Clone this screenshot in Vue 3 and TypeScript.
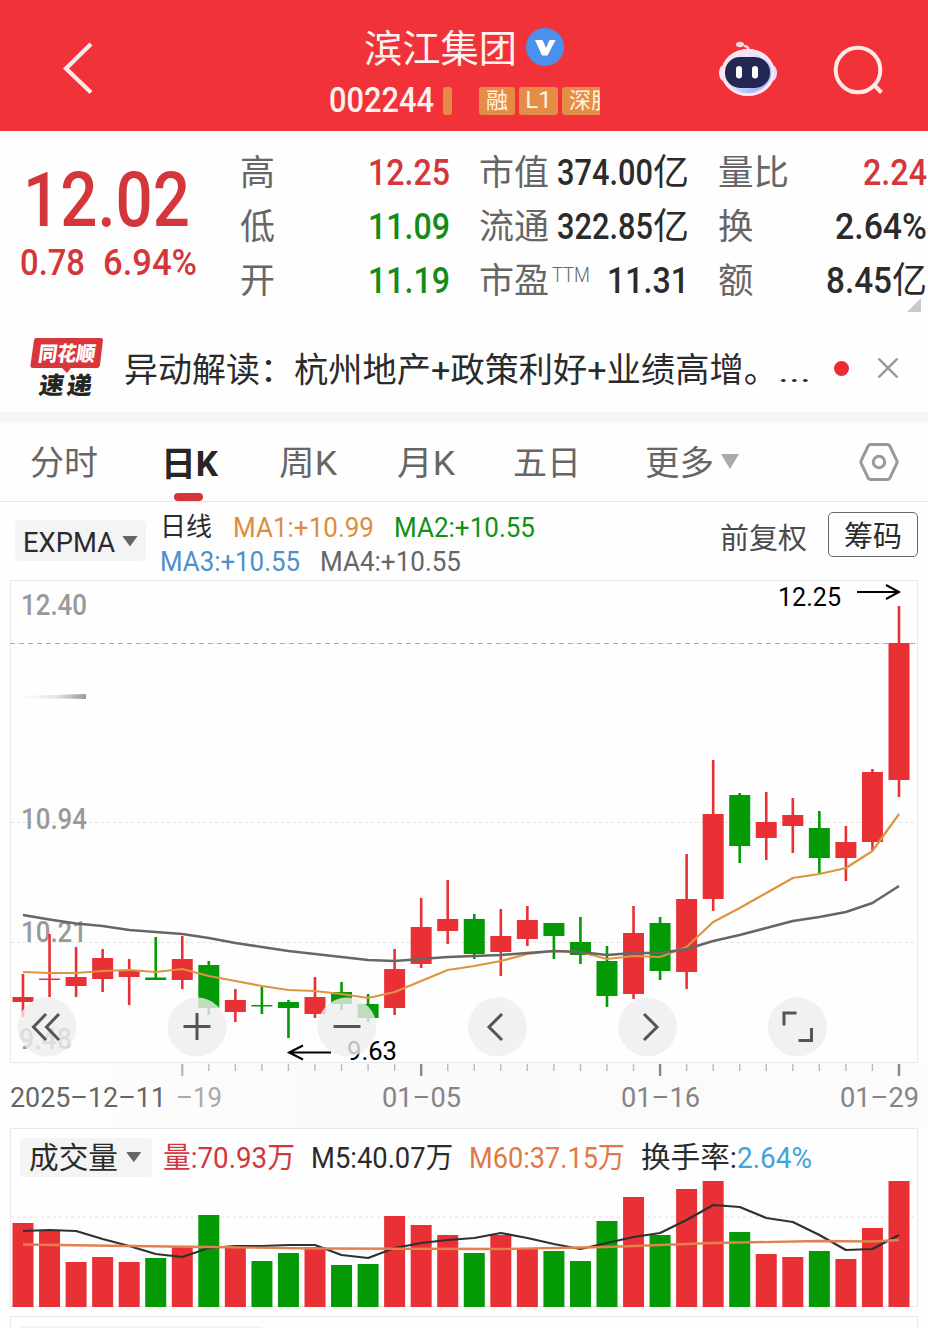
<script setup lang="ts">
import { h, type FunctionalComponent } from 'vue'

interface LabelProps { t: string; s: number; w: number }

// A line of text fitted to a given advance width; its box is as tall as the capitals.
const Label: FunctionalComponent<LabelProps> = (p) => {
  const height = Math.round(p.s * 0.711)
  return h('svg', { class: 'label', width: p.w, height, overflow: 'visible' }, [
    h('text', { x: 0, y: height, 'font-size': p.s, textLength: p.w, lengthAdjust: 'spacingAndGlyphs' }, p.t),
  ])
}
Label.props = ['t', 's', 'w']

const quotes = [
  { name: '高', value: '12.25', tone: 'up', cap: '市值', capValue: '374.00', w: 96, unit: '亿', side: '量比', sideValue: '2.24', sw: 64, sideUnit: '', sideTone: 'up' },
  { name: '低', value: '11.09', tone: 'down', cap: '流通', capValue: '322.85', w: 96, unit: '亿', side: '换', sideValue: '2.64%', sw: 92, sideUnit: '', sideTone: '' },
  { name: '开', value: '11.19', tone: 'down', cap: '市盈', capValue: '11.31', w: 82, unit: '', side: '额', sideValue: '8.45', sw: 66, sideUnit: '亿', sideTone: '' },
]

const x = (i: number): number => 23 + i * 26.545

type Candle = [up: number, high: number, top: number, bottom: number, low: number]
const candles: Candle[] = [
  [1, 974, 997, 1002, 1017], [1, 934, 978.5, 980, 997], [1, 947, 977, 986, 997], [1, 949, 958, 979, 992],
  [1, 959, 971, 977, 1005], [0, 937, 977.5, 980, 980], [1, 936, 959, 980, 989], [0, 961, 965, 1008, 1015],
  [1, 989, 1000, 1012, 1022], [0, 987, 1005, 1006.5, 1014], [0, 1000, 1002, 1008, 1038], [1, 977, 997, 1014, 1018],
  [0, 982, 992, 1004, 1010], [0, 994, 1004, 1018, 1022], [1, 949, 969, 1008, 1015], [1, 898, 927, 964, 968],
  [1, 880, 919, 931, 944], [0, 914, 919, 954, 959], [1, 909, 936, 952, 976], [1, 906, 920, 939, 946],
  [0, 923, 923, 936, 959], [0, 917, 942, 955, 964], [0, 946, 961, 996, 1007], [1, 906, 933, 994, 999],
  [0, 917, 923, 971, 980], [1, 854, 899, 972, 989], [1, 760, 814, 899, 911], [0, 793, 795, 846, 863],
  [1, 792, 822, 838, 860], [1, 798, 815, 826, 853], [0, 811, 828, 858, 873], [1, 826, 842, 858, 881],
  [1, 769, 772, 842, 850], [1, 606, 643, 780, 797],
]
const volumes = [
  1223, 1231, 1262, 1257, 1262, 1258, 1247, 1215, 1248, 1261, 1253, 1247, 1265, 1264, 1216, 1225, 1235,
  1253, 1235, 1249, 1251, 1261, 1221, 1197, 1235, 1189, 1181, 1232, 1254, 1257, 1251, 1259, 1228, 1181,
]
const line = (ys: number[]): string => ys.map((y, i) => `${x(i).toFixed(1)},${y}`).join(' ')

const fast = line([972, 973, 973, 971, 970, 972, 969, 976, 981, 986, 990, 991, 994, 998, 992, 981, 970, 966, 961, 954, 951, 952, 959, 956, 957, 947, 922, 908, 893, 878, 874, 868, 851, 814])
const slow = line([915, 919.5, 923.5, 926, 930, 932, 934, 938, 943, 947, 951, 954, 957, 960, 961, 959, 957, 956, 955, 953, 951, 952, 955, 953, 953, 949, 941, 935, 928, 921, 917, 912, 903, 886])
const volFast = line([1231, 1230, 1231, 1239, 1246, 1254, 1257, 1248, 1246, 1246, 1245, 1245, 1255, 1258, 1248, 1243, 1240, 1238, 1233, 1238, 1244, 1249, 1243, 1237, 1233, 1220, 1205, 1207, 1218, 1222, 1235, 1250, 1249, 1235])
const volSlow = '23,1244.5 129,1246 209,1247 315,1248.5 501,1249 607,1247 713,1243 819,1241 872,1241.5 899,1240'

const ticks = Array.from({ length: 28 }, (_, k) => k + 6)
const isMajor = (i: number): boolean => (i - 6) % 9 === 0

const controls = [
  { cx: 47, d: 'M46 1014 L33.500 1027 L46 1040 M59 1014 L46.500 1027 L59 1040' },
  { cx: 197, d: 'M183.500 1026.500 H210.500 M197 1013 V1040' },
  { cx: 347, d: 'M333.500 1026.500 H360.500' },
  { cx: 497.5, d: 'M502 1014 L489 1027 L502 1040' },
  { cx: 647.5, d: 'M644 1014 L657 1027 L644 1040' },
  { cx: 797.5, d: 'M784 1025.500 V1013 H796.500 M811.500 1028 V1040.500 H798.500' },
]
</script>

<template>
  <main class="page">
    <header class="top">
      <svg class="back" width="36" height="56" viewBox="0 0 36 56"><path d="M31 5 6 29.500l25 24" /></svg>
      <div class="title">
        <div class="name-row">
          <Label class="name" t="滨江集团" :s="38" :w="153" />
          <svg width="38" height="38" viewBox="0 0 38 38">
            <circle cx="19" cy="19" r="19" fill="#4b90ea" />
            <path d="M9 12h7.500l3.500 8 3.500-8H29.500l-8 15.500h-5.500z" fill="#fff" />
          </svg>
        </div>
        <div class="code-row">
          <Label class="code" t="002244" :s="35.500" :w="105" />
          <i class="tag sliver"></i>
          <span class="tag t1">融</span><span class="tag t2">L1</span><span class="tag t3">深股</span>
        </div>
      </div>
      <div class="actions">
        <svg width="60" height="58" viewBox="0 0 60 58">
          <defs><linearGradient id="shell" x1="0" y1="0" x2="1" y2="1">
            <stop offset="0" stop-color="#ffe5f4" /><stop offset=".5" stop-color="#dfe2ff" /><stop offset=".75" stop-color="#a8b4fb" /><stop offset="1" stop-color="#ffe2ee" />
          </linearGradient></defs>
          <path d="M31 12q0-6-5-6" fill="none" stroke="#ffd3dc" stroke-width="2.500" />
          <ellipse cx="22" cy="4.500" rx="4" ry="2.800" fill="#ffd6df" />
          <ellipse cx="6" cy="33" rx="5" ry="8" fill="#ffe2f0" />
          <ellipse cx="54" cy="33" rx="5" ry="8" fill="#e9dcf9" />
          <ellipse cx="30" cy="32.500" rx="26.500" ry="23.500" fill="url(#shell)" />
          <ellipse cx="30" cy="32.500" rx="25" ry="22" fill="none" stroke="#ffe4f1" stroke-width="3" />
          <rect x="7" y="17" width="45" height="31" rx="15" fill="#222852" />
          <rect x="18" y="26" width="6" height="12.500" rx="3" fill="#fff" />
          <rect x="34" y="26" width="6" height="12.500" rx="3" fill="#fff" />
        </svg>
        <svg class="search" width="54" height="54" viewBox="0 0 54 54">
          <circle cx="26" cy="26" r="22.300" /><path d="M41 40l8.500 8.500" />
        </svg>
      </div>
    </header>

    <section class="quote">
      <div class="price up">
        <Label class="medium" t="12.02" :s="76" :w="167" />
        <div class="change">
          <Label class="medium" t="0.78" :s="36" :w="65" />
          <Label class="medium" t="6.94%" :s="36" :w="94" />
        </div>
      </div>
      <div class="stats">
        <div v-for="q in quotes" :key="q.name" class="stat">
          <div class="c1"><Label class="muted" :t="q.name" :s="35" :w="35" /><Label class="medium" :class="q.tone" :t="q.value" :s="36" :w="82" /></div>
          <div class="c2">
            <span class="cap"><Label class="muted" :t="q.cap" :s="35" :w="70" /><Label v-if="!q.unit" class="muted ttm" t="TTM" :s="20" :w="38" /></span>
            <span class="val"><Label class="medium" :t="q.capValue" :s="36" :w="q.w" /><Label v-if="q.unit" :t="q.unit" :s="36" :w="36" /></span>
          </div>
          <div class="c3">
            <Label class="muted" :t="q.side" :s="35" :w="q.side.length * 35.500" />
            <span class="val"><Label class="medium" :class="q.sideTone" :t="q.sideValue" :s="36" :w="q.sw" /><Label v-if="q.sideUnit" :t="q.sideUnit" :s="36" :w="35" /></span>
          </div>
        </div>
        <i class="corner"></i>
      </div>
    </section>

    <section class="notice">
      <svg width="74" height="62" viewBox="0 0 74 62">
        <path d="M6 1H71q2 0 2 2L70 28q-.5 3-3 3H41l-4 5-5-5H3q-3 0-2.500-3L4 3q.4-2 2-2z" fill="#d9363c" />
        <g transform="skewX(-8)" font-weight="900">
          <text x="11" y="24" font-size="20.500" textLength="57" lengthAdjust="spacingAndGlyphs" fill="#fff">同花顺</text>
          <text x="16" y="57" font-size="24" textLength="25" lengthAdjust="spacingAndGlyphs" fill="#252525">速</text>
          <text x="44" y="57" font-size="24" textLength="25" lengthAdjust="spacingAndGlyphs" fill="#252525">递</text>
        </g>
      </svg>
      <p class="news"><Label t="异动解读：" :s="34" :w="170" /><Label t="杭州地产+政策利好+业绩高增。" :s="34" :w="484" /><Label t="..." :s="28" :w="33" /></p>
      <i class="dot"></i>
      <svg class="close" width="20" height="20" viewBox="0 0 20 20"><path d="M.5.5l19 19M19.500.5l-19 19" /></svg>
    </section>

    <nav class="tabs">
      <Label t="分时" :s="34" :w="68" />
      <span class="active"><Label t="日K" :s="34.500" :w="57" /></span>
      <Label t="周K" :s="34" :w="58" />
      <Label t="月K" :s="34" :w="58" />
      <Label t="五日" :s="34" :w="68" />
      <span class="more"><Label t="更多" :s="34" :w="69" /><i class="caret"></i></span>
      <svg class="gear" width="40" height="40" viewBox="0 0 40 40">
        <path d="M11.500 2.500h17q1.500 0 2.200 1.300l7 14.500q.8 1.700 0 3.400l-7 14.500q-.7 1.300-2.200 1.300h-17q-1.500 0-2.200-1.300l-7-14.500q-.8-1.700 0-3.400l7-14.500q.7-1.300 2.200-1.300z" />
        <circle cx="20" cy="20" r="5.700" />
      </svg>
    </nav>

    <section class="legend">
      <button class="pick"><Label t="EXPMA" :s="27.500" :w="92" /><i class="caret small"></i></button>
      <div class="averages">
        <div><Label t="日线" :s="26" :w="52" /><Label class="orange l1" t="MA1:+10.99" :s="27.500" :w="141" /><Label class="green l2" t="MA2:+10.55" :s="27.500" :w="141" /></div>
        <div><Label class="blue" t="MA3:+10.55" :s="27.500" :w="140" /><Label class="muted l2" t="MA4:+10.55" :s="27.500" :w="141" /></div>
      </div>
      <Label class="adjust" t="前复权" :s="29" :w="87" />
      <button class="chips"><Label t="筹码" :s="29" :w="58" /></button>
    </section>

    <svg class="chart" width="928" height="748" viewBox="0 580 928 748">
      <defs>
        <linearGradient id="fade" x1="0" x2="1"><stop offset="0" stop-color="#fefefe" /><stop offset=".55" stop-color="#e4e4e4" /><stop offset="1" stop-color="#999" /></linearGradient>
        <linearGradient id="mist" x1="0" x2="1"><stop offset="0" stop-color="#fefefe" /><stop offset=".35" stop-color="#fafafa" /><stop offset="1" stop-color="#fbfbfb" /></linearGradient>
      </defs>
      <rect x="0" y="1063" width="928" height="65" fill="url(#mist)" />
      <rect x="10.500" y="580.500" width="907" height="482" class="frame" />
      <path d="M11 822.500H917M11 942.500H917" class="grid" />
      <path d="M10 643.500H916" class="last" />
      <path d="M20 696l66-2v5l-66-1z" fill="url(#fade)" />
      <g class="scale">
        <text x="21" y="615" textLength="66" lengthAdjust="spacingAndGlyphs">12.40</text>
        <text x="21" y="829" textLength="66" lengthAdjust="spacingAndGlyphs">10.94</text>
        <text x="21" y="942" textLength="66" lengthAdjust="spacingAndGlyphs">10.21</text>
        <text x="19" y="1049" textLength="53" lengthAdjust="spacingAndGlyphs">9.48</text>
      </g>
      <g v-for="(c, i) in candles" :key="i" :class="c[0] ? 'rise' : 'fall'">
        <rect :x="x(i) - 1.300" :y="c[1]" width="2.600" :height="c[4] - c[1]" />
        <rect :x="x(i) - 10.500" :y="c[2]" width="21" :height="c[3] - c[2]" />
      </g>
      <polyline :points="fast" class="fast" />
      <polyline :points="slow" class="slow" />
      <g class="mark">
        <text x="778" y="606" textLength="63" lengthAdjust="spacingAndGlyphs">12.25</text>
        <path d="M857 592H898M886 585l13 7-13 7" />
        <text x="347" y="1060" textLength="50" lengthAdjust="spacingAndGlyphs">9.63</text>
        <path d="M331 1052.500H289M303 1045.500l-14 7 14 7" />
      </g>
      <g v-for="c in controls" :key="c.cx" class="control">
        <circle :cx="c.cx" cy="1027" r="29.500" /><path :d="c.d" />
      </g>
      <rect v-for="i in ticks" :key="i" :x="x(i) - (isMajor(i) ? 1.200 : .7)" y="1064" :width="isMajor(i) ? 2.400 : 1.400" :height="isMajor(i) ? 12 : 7" :class="isMajor(i) && i > 6 ? 'major' : 'minor'" />
      <g class="dates">
        <text x="10" y="1107" textLength="156" lengthAdjust="spacingAndGlyphs" class="first">2025–12–11</text>
        <text x="176" y="1107" textLength="46" lengthAdjust="spacingAndGlyphs" class="pale">–19</text>
        <text x="382" y="1107" textLength="79" lengthAdjust="spacingAndGlyphs">01–05</text>
        <text x="621" y="1107" textLength="79" lengthAdjust="spacingAndGlyphs">01–16</text>
        <text x="840" y="1107" textLength="79" lengthAdjust="spacingAndGlyphs">01–29</text>
      </g>

      <rect x="10.500" y="1128.500" width="907" height="178" class="frame" />
      <path d="M11 1217H917" class="grid" />
      <rect x="20" y="1138" width="132" height="39" rx="4" fill="#f4f4f4" />
      <path d="M127 1152.500h13.500l-6.700 9z" fill="#666" stroke="#666" stroke-linejoin="round" />
      <g class="volume-text">
        <text x="29" y="1168" font-size="30" textLength="89" lengthAdjust="spacingAndGlyphs">成交量</text>
        <text x="163" y="1168" textLength="132" lengthAdjust="spacingAndGlyphs" class="red">量:70.93万</text>
        <text x="311" y="1168" textLength="142" lengthAdjust="spacingAndGlyphs">M5:40.07万</text>
        <text x="469" y="1168" textLength="156" lengthAdjust="spacingAndGlyphs" class="coral">M60:37.15万</text>
        <text x="641" y="1168" textLength="96" lengthAdjust="spacingAndGlyphs">换手率:</text>
        <text x="737" y="1168" textLength="75" lengthAdjust="spacingAndGlyphs" class="sky">2.64%</text>
      </g>
      <rect v-for="(v, i) in volumes" :key="i" :x="x(i) - 10.500" :y="v" width="21" :height="1307 - v" :class="candles[i][0] ? 'rise' : 'fall'" />
      <polyline :points="volFast" class="vol-fast" />
      <polyline :points="volSlow" class="vol-slow" />
      <path d="M10.500 1328V1316.500H917.500V1328" class="frame" />
      <rect x="20" y="1326.500" width="242" height="4" fill="#f2f2f2" />
    </svg>
  </main>
</template>

<style scoped>
.page { width: 928px; height: 1328px; overflow: hidden; background: #fefefe; color: #2b2b2b; font-family: Roboto, "Noto Sans CJK SC", sans-serif; }
svg { display: block; flex: none; }
.label { fill: currentColor; overflow: visible; }
.medium, .code { font-weight: 500; }
.muted { color: #666; }
.up { color: #d3363b; }
.down { color: #128b18; }
.top { display: grid; grid-template-columns: 329px 271px 328px; height: 131px; background: #f23239; color: #fff3f1; }
.back { margin: 39px 0 0 60px; fill: none; stroke: #ffeae7; stroke-width: 4.2; }
.name-row { display: flex; align-items: center; justify-content: center; gap: 9px; height: 38px; margin-top: 28px; padding-right: 2px; }
.name { margin-top: 3px; }
.code-row { display: flex; align-items: center; height: 28px; margin-top: 21px; }
.code { margin-top: -3px; }
.tag { flex: none; box-sizing: border-box; height: 28px; border-radius: 3px; background: #e58c47; color: #fff4df; font-size: 22px; line-height: 27px; text-align: center; font-style: normal; white-space: nowrap; }
.sliver { width: 9px; margin: 0 27px 0 9px; }
.t1 { width: 36px; }
.t2 { width: 39px; margin: 0 4px; font-size: 24px; }
.t3 { width: 38px; padding-left: 7px; text-align: left; overflow: hidden; border-radius: 3px 0 0 3px; }
.actions { display: flex; padding: 40px 0 0 118px; gap: 54px; }
.search { margin-top: 4px; fill: none; stroke: #ffe9e7; stroke-width: 4; }
.quote { display: flex; height: 189px; }
.price { width: 241px; padding: 41px 0 0 23px; box-sizing: border-box; }
.change { display: flex; gap: 18px; margin: 23px 0 0 -3px; }
.stats { width: 687px; padding-top: 14px; }
.stat { display: grid; grid-template-columns: 209px 30px 209px 30px 208px; height: 54px; align-items: center; }
.c1, .c2, .c3 { display: flex; justify-content: space-between; align-items: center; }
.c1 { grid-column: 1; }
.c2 { grid-column: 3; }
.c3 { grid-column: 5; }
.c1 > .muted, .c3 > .muted, .cap { margin-left: -1px; }
.cap, .val { display: flex; align-items: center; }
.val { margin-top: -1px; }
.ttm { margin: -10px 0 0 3px; font-weight: 300; }
.corner { display: block; width: 14px; height: 14px; margin: -9px 7px 0 auto; background: #c9c9c9; clip-path: polygon(100% 0, 100% 100%, 0 100%); }
.notice { display: flex; align-items: center; height: 92px; padding: 4px 0 0 30px; box-sizing: border-box; }
.news { display: flex; align-items: flex-end; margin: 4px 0 0 20px; width: 710px; }
.dot { width: 15px; height: 15px; border-radius: 50%; background: #ee2b32; }
.close { margin-left: 29px; stroke: #999; stroke-width: 2.4; }
.tabs { display: flex; align-items: center; height: 90px; box-sizing: border-box; border-top: 10px solid #f6f6f6; border-bottom: 1px solid #e4e4e4; padding: 3px 30px 0; color: #666; }
.active { display: flex; align-items: center; position: relative; height: 100%; margin: 0 61px 0 63px; color: #262626; font-weight: 700; }
.active::after { content: ""; position: absolute; left: 13px; bottom: 0; width: 29px; height: 8px; border-radius: 4px; background: #d5343b; }
.tabs > .label:nth-child(3) { margin-right: 60px; }
.tabs > .label:nth-child(4) { margin-right: 58px; }
.more { display: flex; align-items: center; gap: 7px; margin-left: 64px; }
.caret { width: 18px; height: 15px; margin-top: -3px; background: #aaa; clip-path: polygon(0 0, 100% 0, 50% 100%); }
.small { width: 16px; height: 11px; margin-top: -1px; background: #666; }
.gear { margin-left: auto; margin-top: -3px; margin-right: -1px; fill: none; stroke: #999; stroke-width: 3; }
.legend { display: flex; height: 78px; }
button { display: flex; align-items: center; box-sizing: border-box; padding: 0; border: 0; background: none; color: inherit; font: inherit; }
.pick { width: 131px; height: 41px; margin: 18px 14px 0 15px; padding: 2px 0 0 8px; gap: 7px; border-radius: 5px; background: #f4f4f4; }
.averages { width: 561px; padding-top: 7px; }
.averages div { display: flex; align-items: center; height: 35px; }
.averages div + div { height: 33px; }
.l1 { margin-left: 21px; }
.l2 { margin-left: 20px; }
.orange { color: #dc8d3e; }
.green { color: #129119; }
.blue { color: #4d91c9; }
.adjust { margin: 26px 0 0 -1px; color: #4a4a4a; }
.chips { justify-content: center; width: 90px; height: 45px; margin: 10px 0 0 21px; padding-top: 3px; border: 1.5px solid #666; border-radius: 5px; }
.frame { fill: none; stroke: #e9e9e9; }
.grid { stroke: #e2e2e2; stroke-dasharray: 3 3; }
.last { stroke: #b3ad78; stroke-dasharray: 5 4; }
.scale { fill: #999; font-size: 29px; font-weight: 500; }
.rise { fill: #e93135; }
.fall { fill: #049a05; }
polyline { fill: none; stroke-linejoin: round; }
.fast { stroke: #df943f; stroke-width: 2.2; }
.slow { stroke: #666; stroke-width: 2.6; }
.mark { fill: #000; font-size: 26px; }
.mark path { fill: none; stroke: #000; stroke-width: 2; }
.control circle { fill: #eee; fill-opacity: .8; }
.control path { fill: none; stroke: #555; stroke-width: 3; }
.major { fill: #888; }
.minor { fill: #bbb; }
.dates { fill: #858585; font-size: 28.5px; }
.dates .first { fill: #666; }
.dates .pale { fill: #aaa; }
.volume-text { fill: #2b2b2b; font-size: 29px; }
.volume-text .red { fill: #d3363b; }
.volume-text .coral { fill: #e17945; }
.volume-text .sky { fill: #43a3d5; }
.vol-fast { stroke: #303030; stroke-width: 2.2; }
.vol-slow { stroke: #e0814f; stroke-width: 2.4; }
</style>

<style>
body { background: #fefefe; }
</style>
